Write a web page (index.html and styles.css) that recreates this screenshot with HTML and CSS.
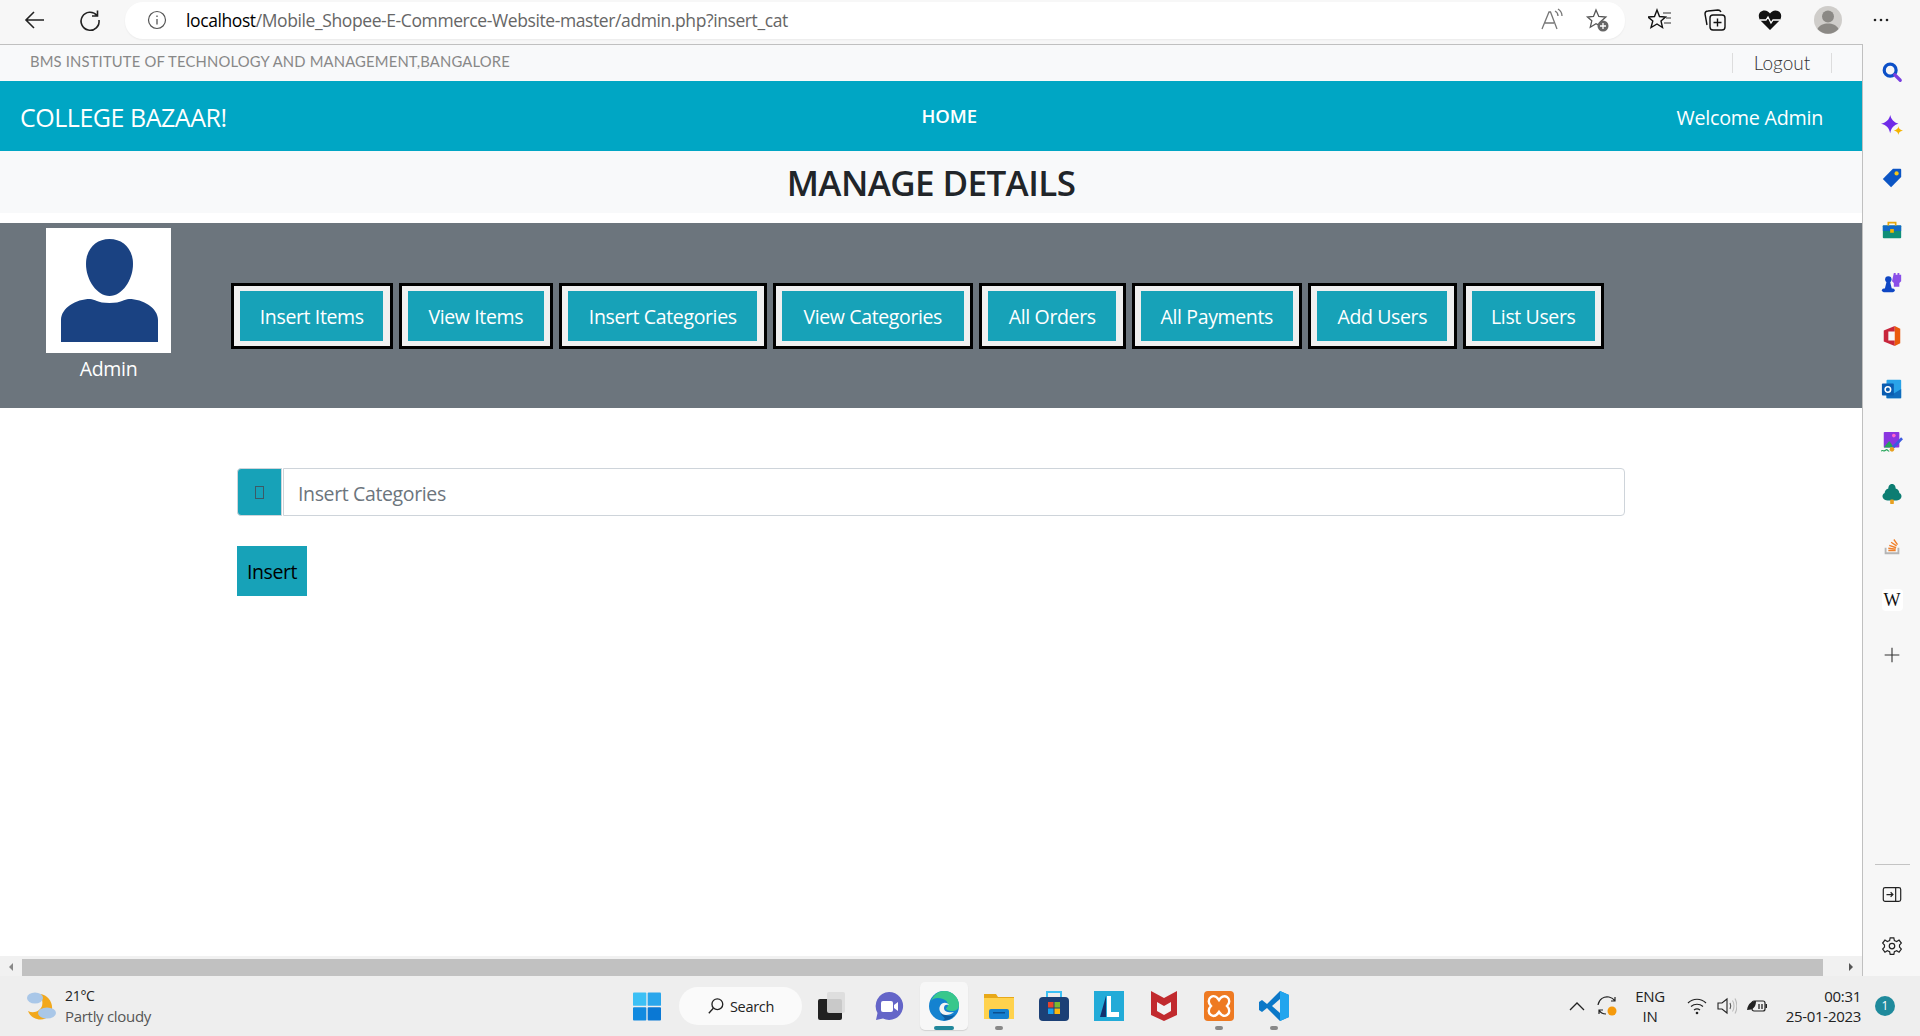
FILE: index.html
```html
<!DOCTYPE html>
<html lang="en">
<head>
<meta charset="utf-8">
<title>Manage Details</title>
<link rel="stylesheet" href="styles.css">
</head>
<body>
<div class="app">
  <header class="toolbar">
    <div class="nav-icons">
      <svg class="t-ic" viewBox="0 0 24 24"><path d="M21 12H4M11 4l-8 8 8 8" fill="none" stroke="#222" stroke-width="1.6"/></svg>
      <svg class="t-ic" viewBox="0 0 24 24"><path d="M19 7.500A9 9 0 1 0 21 12M19.500 2.500V8H14" fill="none" stroke="#222" stroke-width="1.6"/></svg>
    </div>
    <div class="address">
      <svg class="info" viewBox="0 0 20 20"><circle cx="10" cy="10" r="8.500" fill="none" stroke="#555" stroke-width="1.200"/><path d="M10 9v5.500M10 5.500v1.500" stroke="#555" stroke-width="1.300"/></svg>
      <span class="url"><span class="url-host">localhost</span>/Mobile_Shopee-E-Commerce-Website-master/admin.php?insert_cat</span>
      <span class="addr-end">
        <svg class="t-ic" viewBox="0 0 24 24"><path d="M2 21L9 4h1.500L17 21M5 15h9M15 3c2 1 3 3 3 5M18 1c3 2 4 4 4 7" fill="none" stroke="#777" stroke-width="1.300"/></svg>
        <svg class="t-ic" viewBox="0 0 24 24"><path d="M11 2l2.800 6.500 7 .6-5.300 4.600 1.200 5-5.700-3-5.700 3.500 1.500-6.400L2.500 9l6-.5z" fill="none" stroke="#555" stroke-width="1.300"/><circle cx="18" cy="18" r="5.500" fill="#666"/><path d="M18 15v6M15 18h6" stroke="#fff" stroke-width="1.300"/></svg>
      </span>
    </div>
    <div class="tool-icons">
      <svg class="t-ic" viewBox="0 0 24 24"><path d="M9 2l2.500 6.500 6 .5-4.500 4 1.500 6.500-5.500-3.500-6 3.500 1.800-6.500L0 9l6.500-.5z" fill="none" stroke="#111" stroke-width="1.400"/><path d="M15 5h8M18 10h5M16 15h7" stroke="#333" stroke-width="1.200"/></svg>
      <svg class="t-ic" viewBox="0 0 24 24"><rect x="7" y="7" width="15" height="15" rx="3" fill="none" stroke="#111" stroke-width="1.400"/><path d="M14.500 10.500v8M10.500 14.500h8" stroke="#111" stroke-width="1.400"/><path d="M4 17L2 6c0-2 1-3 3-3l10-1c1.500 0 2.500 1 3 2" fill="none" stroke="#111" stroke-width="1.400"/></svg>
      <svg class="t-ic" viewBox="0 0 24 24"><path d="M12 22L2 12C-1 7 2 2.500 6.500 2.500 9 2.500 11 4 12 5.500 13 4 15 2.500 17.500 2.500 22 2.500 25 7 22 12z" fill="#111"/><path d="M2 12h6l2-3 3 6 2-3h7" fill="none" stroke="#fff" stroke-width="1.300"/></svg>
      <svg class="avatar-ic" viewBox="0 0 28 28"><circle cx="14" cy="14" r="14" fill="#cfcdca"/><circle cx="14" cy="10.500" r="6" fill="#8b8985"/><path d="M3.500 23c2-4 6-5.500 10.500-5.500S22.500 19 24.500 23a14 14 0 0 1-21 0z" fill="#8b8985"/></svg>
      <svg class="dots" viewBox="0 0 16 4"><circle cx="2" cy="2" r="1.300" fill="#222"/><circle cx="8" cy="2" r="1.300" fill="#222"/><circle cx="14" cy="2" r="1.300" fill="#222"/></svg>
    </div>
  </header>

  <div class="workspace">
    <div class="main">
      <div class="page">
        <div class="topline">
          <span class="college">BMS INSTITUTE OF TECHNOLOGY AND MANAGEMENT,BANGALORE</span>
          <a class="logout">Logout</a>
        </div>
        <nav class="brandbar">
          <span class="brand">COLLEGE BAZAAR!</span>
          <span class="home">HOME</span>
          <span class="welcome">Welcome Admin</span>
        </nav>
        <h1 class="title">MANAGE DETAILS</h1>
        <section class="admin-band">
          <div class="profile">
            <div class="photo">
              <svg class="photo-svg" viewBox="0 0 125 125"><path d="M63.500 11C50 11 40 21 40 36c0 16 11 32 23.500 32S87 52 87 36C87 21 77 11 63.500 11z" fill="#1a4282"/><path d="M15 114V92C15 80 30 71 44 71c5 0 7 4 19.500 4S78 71 83 71c14 0 29 9 29 21v22z" fill="#1a4282"/></svg>
            </div>
            <span class="admin-name">Admin</span>
          </div>
          <div class="actions">
            <div class="act"><a class="act-btn w1">Insert Items</a></div>
            <div class="act"><a class="act-btn w2">View Items</a></div>
            <div class="act"><a class="act-btn w3">Insert Categories</a></div>
            <div class="act"><a class="act-btn w4">View Categories</a></div>
            <div class="act"><a class="act-btn w5">All Orders</a></div>
            <div class="act"><a class="act-btn w6">All Payments</a></div>
            <div class="act"><a class="act-btn w7">Add Users</a></div>
            <div class="act"><a class="act-btn w8">List Users</a></div>
          </div>
        </section>
        <form class="cat-form">
          <div class="input-group">
            <span class="prepend"><span class="tofu"></span></span>
            <input class="cat-input" type="text" placeholder="Insert Categories">
          </div>
          <button class="insert" type="button">Insert</button>
        </form>
      </div>
      <div class="hscroll">
        <svg class="arrow" viewBox="0 0 8 10"><path d="M6 1v8L2 5z" fill="#888"/></svg>
        <div class="thumb"></div>
        <svg class="arrow arrow-end" viewBox="0 0 8 10"><path d="M2 1v8l4-4z" fill="#555"/></svg>
      </div>
    </div>

    <aside class="sidebar">
      <div class="side-top">
        <svg class="s-ic" viewBox="0 0 24 24"><circle cx="10" cy="10" r="6.500" fill="none" stroke="#0c50c8" stroke-width="3.500"/><path d="M15 15l6 6" stroke="#7a3fe0" stroke-width="3.500" stroke-linecap="round"/></svg>
        <svg class="s-ic" viewBox="0 0 24 24"><path d="M10 1c1 5 4 8 9 9.500-5 1.500-8 4.500-9 10.500-1-6-4-9-10-10.500C6 9 9 6 10 1z" fill="#6f2be8"/><path d="M19 13c.4 2.800 1.200 3.700 5 5-3.800 1.300-4.600 2.200-5 5-.4-2.800-1.200-3.700-5-5 3.800-1.300 4.600-2.200 5-5z" fill="#f5b400"/></svg>
        <svg class="s-ic" viewBox="0 0 24 24"><path d="M13 2h8a1 1 0 0 1 1 1v8L11 22 2 13z" fill="#0c55c4"/><circle cx="17" cy="7" r="2.300" fill="#f5c518"/></svg>
        <svg class="s-ic" viewBox="0 0 24 24"><rect x="2" y="7" width="20" height="14" rx="1" fill="#0f8f78"/><rect x="2" y="7" width="20" height="6" fill="#1269c7"/><path d="M8 7V4h8v3" fill="none" stroke="#e8a80c" stroke-width="1.800"/><rect x="10" y="11" width="4" height="4" fill="#f5b400"/></svg>
        <svg class="s-ic" viewBox="0 0 24 24"><path d="M14 1h2v2h2V1h2v2h2V1v9l-2 2v4h-6v-4l-2-2z" fill="#8a4fe8"/><circle cx="8" cy="8" r="3.500" fill="#0f47c4"/><path d="M6 11h4l2 8H4z" fill="#0f47c4"/><rect x="1" y="18" width="14" height="4" rx="2" fill="#0f47c4"/></svg>
        <svg class="s-ic" viewBox="0 0 24 24"><path d="M3 6l12-5v6H8v10h7v6L3 18z" fill="#c8263c"/><path d="M15 1l6 3v16l-6 3z" fill="#ea5a0c"/></svg>
        <svg class="s-ic" viewBox="0 0 24 24"><rect x="6" y="2" width="16" height="20" rx="1" fill="#29a3e8"/><path d="M6 12l8 5 8-5v10H6z" fill="#0f6cbd"/><rect x="1" y="6" width="13" height="13" rx="1" fill="#0a5cb0"/><circle cx="7.500" cy="12.500" r="3" fill="none" stroke="#fff" stroke-width="1.700"/></svg>
        <svg class="s-ic" viewBox="0 0 24 24"><rect x="3" y="1" width="17" height="17" rx="1" fill="#8a35e0"/><path d="M3 18l6-7 5 7z" fill="#25a55a"/><circle cx="14" cy="5" r="2" fill="#f6c"/><path d="M23 8L13 18" stroke="#3d5ae0" stroke-width="3"/><circle cx="12" cy="20" r="2.500" fill="#e8a020"/><path d="M0 22c2-2 3 1 5-1s2 1 4 1" fill="none" stroke="#25a55a" stroke-width="1.200"/></svg>
        <svg class="s-ic" viewBox="0 0 24 24"><path d="M12 1c-3 0-4 3-4 5-3 1-4 3-4 5-2 1-3 3-2 5 1 2 3 3 5 3h10c2 0 4-1 5-3 1-2 0-4-2-5 0-2-1-4-4-5 0-2-1-5-4-5z" fill="#0c7d72"/><rect x="10" y="18" width="4" height="5" rx="1" fill="#e8a020"/></svg>
        <svg class="s-ic s-up" viewBox="0 0 24 24"><path d="M5 15v6h14v-6" fill="none" stroke="#b5b5b5" stroke-width="2"/><path d="M8 18h8M8 15.500l8 1M9 12.500l7.500 2.500M11 9l6 4M14 6l4 5.500" stroke="#f0802a" stroke-width="1.500"/></svg>
        <span class="wiki">W</span>
        <svg class="s-ic s-down" viewBox="0 0 24 24"><path d="M12 4v16M4 12h16" stroke="#333" stroke-width="1.200"/></svg>
      </div>
      <div class="side-bottom">
        <div class="side-sep"></div>
        <svg class="s-ic" viewBox="0 0 24 24"><rect x="2.500" y="4" width="19" height="15" rx="2" fill="none" stroke="#222" stroke-width="1.300"/><path d="M16 4v15M6 11.500h7M10.500 9l2.500 2.500-2.500 2.500" fill="none" stroke="#222" stroke-width="1.300"/></svg>
        <svg class="s-ic" viewBox="0 0 24 24"><path d="M10 2h4l.6 3 2.500 1 2.600-1.600 2.500 3.300-2 2.200v2.200l2 2.200-2.500 3.300-2.600-1.600-2.500 1-.6 3h-4l-.6-3-2.500-1-2.600 1.600-2.500-3.300 2-2.200V9.900l-2-2.200 2.500-3.300 2.600 1.600 2.500-1z" fill="none" stroke="#222" stroke-width="1.300"/><circle cx="12" cy="11" r="3" fill="none" stroke="#222" stroke-width="1.300"/></svg>
      </div>
    </aside>
  </div>

  <footer class="taskbar">
    <div class="weather">
      <svg class="weather-ic" viewBox="0 0 30 32"><path d="M14 4c8 1 13 8 12 16-1 7-8 11-15 9-5-1-8-5-9-8 6 3 12 0 14-5 1-4 0-8-2-12z" fill="#f2a81c"/><ellipse cx="9" cy="8" rx="8" ry="5.500" fill="#a9c7e8"/><ellipse cx="21" cy="23" rx="9" ry="5.500" fill="#a9c7e8"/></svg>
      <div class="weather-text"><span class="temp">21°C</span><span class="cond">Partly cloudy</span></div>
    </div>
    <div class="task-center">
      <div class="tile"><svg class="b-ic b-win" viewBox="0 0 30 30"><rect x="0" y="0" width="14.300" height="14.300" rx="1" fill="#3cc0f5"/><rect x="15.700" y="0" width="14.300" height="14.300" rx="1" fill="#2aa6ec"/><rect x="0" y="15.700" width="14.300" height="14.300" rx="1" fill="#118ae0"/><rect x="15.700" y="15.700" width="14.300" height="14.300" rx="1" fill="#0a78d4"/></svg></div>
      <div class="search-pill"><svg class="search-ic" viewBox="0 0 20 20"><circle cx="11.500" cy="8" r="6" fill="none" stroke="#222" stroke-width="1.500"/><path d="M7 12.500L2 18" stroke="#222" stroke-width="1.500"/></svg><span>Search</span></div>
      <div class="tile tile-narrow"><svg class="b-ic" viewBox="0 0 30 30"><rect x="1" y="8" width="24" height="21" rx="2" fill="#222"/><rect x="10" y="1" width="18" height="21" rx="2" fill="#dcdcdc" fill-opacity=".9"/></svg></div>
      <div class="tile"><svg class="b-ic" viewBox="0 0 30 30"><path d="M15 1a14 14 0 1 1-6 26.600L2 29l1.500-7A14 14 0 0 1 15 1z" fill="#6465c8"/><rect x="7" y="10" width="12" height="11" rx="2" fill="#fff"/><path d="M20 14l4-3v9l-4-3z" fill="#fff"/></svg></div>
      <div class="tile tile-active"><svg class="b-ic" viewBox="0 0 30 30"><circle cx="15" cy="15" r="15" fill="#1482d0"/><path d="M2 10C5 3 10 0 15 0c9 0 15 7 15 14 0 4-3 6-7 6-3 0-6-1-6-3 3-1 3-7-3-9C9 6 4 7 2 10z" fill="#38c78c"/><path d="M12 17c0 5 5 8 9 8 2 0 4-1 5-2-3 5-8 7-12 6 4-1 0-3-2-6z" fill="#0d5a9e"/><path d="M11 15c2-4 7-4 9-1-3-1-5 0-5 3 0 4 5 5 10 4-2 2-5 3-8 3-5 0-8-5-6-9z" fill="#f4f4f4"/></svg><span class="run run-active"></span></div>
      <div class="tile"><svg class="b-ic" viewBox="0 0 30 30"><path d="M0 3h12l2 3h16v22H0z" fill="#e8a818"/><rect x="0" y="7" width="30" height="21" fill="#ffd24d"/><rect x="5" y="18" width="20" height="10" rx="2" fill="#1580d0"/><rect x="9" y="21" width="12" height="1.500" fill="#0b4f90"/></svg><span class="run"></span></div>
      <div class="tile"><svg class="b-ic" viewBox="0 0 30 30"><rect x="0" y="6" width="30" height="24" rx="4" fill="#1c4076"/><path d="M8 6V1h14v5" fill="none" stroke="#3cc0f5" stroke-width="2"/><rect x="9" y="11" width="5.500" height="5.500" fill="#e8452c"/><rect x="15.500" y="11" width="5.500" height="5.500" fill="#7cb82e"/><rect x="9" y="17.500" width="5.500" height="5.500" fill="#18a0ee"/><rect x="15.500" y="17.500" width="5.500" height="5.500" fill="#fbb70c"/></svg></div>
      <div class="tile"><svg class="b-ic" viewBox="0 0 30 30"><rect width="30" height="30" fill="#22abd8"/><path d="M6 26L12 5v21z" fill="#12316e"/><path d="M13 5h4v16h8v5H13z" fill="#fff"/></svg></div>
      <div class="tile"><svg class="b-ic" viewBox="0 0 30 30"><path d="M2 0l13 7 13-7v24l-13 6-13-6z" fill="#c12a2e"/><path d="M8 11l7 4 7-4v9l-7 4-7-4z" fill="#f2f2f2"/></svg></div>
      <div class="tile"><svg class="b-ic" viewBox="0 0 30 30"><rect width="30" height="30" rx="4" fill="#ee7a22"/><path d="M7 6c3-2 6 0 8 3 2-3 5-5 8-3s3 6 0 9c3 3 3 7 0 9s-6 0-8-3c-2 3-5 5-8 3s-3-6 0-9c-3-3-3-7 0-9z" fill="none" stroke="#fff" stroke-width="2.400"/></svg><span class="run"></span></div>
      <div class="tile"><svg class="b-ic" viewBox="0 0 30 30"><path d="M21 0l9 4v22l-9 4L8 17l-5 4-3-2v-8l3-2 5 4z" fill="#0b78c8"/><path d="M21 0l9 4v22l-9 4z" fill="#22a5ee"/><path d="M21 8l-8 7 8 7z" fill="#eee"/></svg><span class="run"></span></div>
    </div>
    <div class="tray">
      <svg class="chev" viewBox="0 0 16 10"><path d="M1 9l7-7 7 7" fill="none" stroke="#222" stroke-width="1.300"/></svg>
      <svg class="tray-ic sync" viewBox="0 0 20 20"><path d="M1 9C2 3 7 0 12 1c3 .6 5 2.500 6 4M18 1v4h-4M2 18v-4h4M2 14c1.500 3 4 4 7 4" fill="none" stroke="#222" stroke-width="1.200"/><circle cx="15" cy="15" r="4.500" fill="#f59a0c"/></svg>
      <div class="lang"><span>ENG</span><span>IN</span></div>
      <svg class="tray-ic" viewBox="0 0 20 20"><path d="M1 7c5-5 13-5 18 0M4 10.500c3.500-3 8.500-3 12 0M7 14c2-1.500 4-1.500 6 0" fill="none" stroke="#222" stroke-width="1.200"/><circle cx="10" cy="17" r="1.300" fill="#222"/></svg>
      <svg class="tray-ic" viewBox="0 0 20 20"><path d="M1 7h4l5-4v14l-5-4H1z" fill="none" stroke="#222" stroke-width="1.100"/><path d="M13 7c1 2 1 4 0 6" fill="none" stroke="#555" stroke-width="1.100"/><path d="M15.500 4.500c2 3 2 8 0 11M18 2.500c2.500 5 2.500 10 0 15" fill="none" stroke="#bbb" stroke-width="1.100"/></svg>
      <svg class="tray-ic" viewBox="0 0 20 20"><rect x="5" y="5" width="13" height="10" rx="2" fill="none" stroke="#222" stroke-width="1.200"/><rect x="18.500" y="8" width="1.500" height="4" fill="#222"/><path d="M0 14C1 7 5 5 9 5c0 6-3 9-9 9z" fill="#222"/><path d="M12 8v5M15 8v5" stroke="#222" stroke-width="1.300"/></svg>
      <div class="clock"><span>00:31</span><span>25-01-2023</span></div>
      <span class="badge">1</span>
    </div>
  </footer>
</div>
</body>
</html>
```

FILE: styles.css
```css
* { box-sizing: border-box; }
html, body { margin: 0; height: 100%; overflow: hidden; }
body { font-family: "Open Sans", "Noto Sans", sans-serif; background: #fff; color: #212529; }
.app { display: flex; flex-direction: column; width: 1920px; height: 1036px; }

/* browser toolbar */
.toolbar { height: 44px; flex: none; display: flex; align-items: center; background: #f7f7f7; padding-bottom: 3px; }
.nav-icons { display: flex; align-items: center; gap: 31px; padding-left: 23px; width: 125px; margin-bottom: 2px; }
.t-ic { width: 24px; height: 24px; display: block; flex: none; }
.address { width: 1500px; height: 37px; background: #fff; border-radius: 18px; display: flex; align-items: center; padding-left: 22px; box-shadow: 0 1px 2px rgba(0,0,0,.05); }
.info { width: 20px; height: 20px; flex: none; margin-bottom: 2px; }
.url { margin-left: 19px; margin-bottom: 2px; font-size: 17.500px; letter-spacing: -.4px; color: #666; white-space: nowrap; }
.url-host { color: #000; }
.addr-end { margin-left: auto; margin-bottom: 2px; display: flex; gap: 21px; padding-right: 16px; }
.tool-icons { display: flex; align-items: center; gap: 31px; padding-left: 23px; margin-bottom: 2px; }
.avatar-ic { width: 28px; height: 28px; flex: none; margin-left: 1px; }
.dots { width: 16px; height: 4px; flex: none; margin-left: 0; }

/* workspace */
.workspace { flex: 1; display: flex; min-height: 0; }
.main { width: 1863px; flex: none; display: flex; flex-direction: column; border-top: 1px solid #c0c0c0; border-right: 1.500px solid #c0c0c0; }
.page { flex: 1; min-height: 0; background: #fff; }
.topline { height: 36px; background: #f8f9fa; display: flex; align-items: center; justify-content: space-between; padding: 0 30px; }
.college { font-family: Lato, sans-serif; font-size: 14.800px; font-weight: 400; color: #888; letter-spacing: .16px; white-space: nowrap; margin-bottom: 5px; }
.logout { font-family: Lato, sans-serif; font-size: 19px; font-weight: 300; color: #333; width: 100px; height: 20px; line-height: 20px; text-align: center; border-left: 1px solid #ddd; border-right: 1px solid #ddd; }
.brandbar { height: 70px; background: #00a6c4; color: #fff; display: grid; grid-template-columns: 1fr auto 1fr; align-items: center; padding: 0 39px 0 20px; }
.brand { font-size: 25px; letter-spacing: -.47px; margin-top: 2px; }
.home { font-size: 18.500px; font-weight: 600; letter-spacing: -.1px; margin-right: -92px; margin-bottom: 1px; }
.welcome { font-size: 19.700px; letter-spacing: -.25px; justify-self: end; margin-top: 2px; }
.title { margin: 0 0 10px; height: 62px; background: #f8f9fa; text-align: center; font-size: 35px; line-height: 64px; font-weight: 600; letter-spacing: -.6px; color: #212529; }
.admin-band { height: 185px; background: #6c757d; display: flex; padding: 5px 0 0 46px; }
.profile { width: 125px; flex: none; display: flex; flex-direction: column; align-items: center; }
.photo { width: 125px; height: 125px; background: #fff; }
.photo-svg { display: block; width: 125px; height: 125px; }
.admin-name { color: #fff; font-size: 19.500px; letter-spacing: -.3px; margin-top: 2px; }
.actions { display: flex; align-items: flex-start; gap: 6px; margin: 55px 0 0 60px; }
.act { border: 3px solid #000; background: #f0f0f0; padding: 5px 6.250px; }
.act-btn { display: block; height: 50px; line-height: 52px; background: #17a2b8; color: #fff; font-size: 19.500px; letter-spacing: -.37px; text-align: center; white-space: nowrap; }
.w1 { width: 143px; } .w2 { width: 136px; } .w3 { width: 189px; } .w4 { width: 182px; }
.w5 { width: 128px; } .w6 { width: 152px; } .w7 { width: 130px; } .w8 { width: 123px; }
.cat-form { padding: 60px 0 0 237px; }
.input-group { display: flex; width: 1388px; height: 48px; }
.prepend { width: 45px; flex: none; background: #17a2b8; border: 1px solid #ced4da; border-radius: 4px 0 0 4px; display: flex; align-items: center; justify-content: center; }
.tofu { width: 9px; height: 13px; border: 1px solid #3c5a66; display: block; }
.cat-input { flex: 1; min-width: 0; height: 48px; border: 1px solid #ced4da; border-radius: 0 4px 4px 0; margin-left: 1px; padding: 3px 14px 0; font-family: inherit; font-size: 19.500px; letter-spacing: -.37px; color: #495057; background: #fff; outline: none; }
.cat-input::placeholder { color: #6c757d; opacity: 1; }
.insert { display: block; margin-top: 30px; width: 70px; height: 50px; border: 0; padding: 1px 0 0; background: #17a2b8; color: #000; font-family: inherit; font-size: 19.500px; letter-spacing: -.39px; }
.hscroll { height: 20px; flex: none; background: #f1f1f1; padding-top: 2px; display: flex; align-items: center; }
.thumb { height: 17px; width: 1801px; background: #c1c1c1; flex: none; }
.arrow { width: 8px; height: 10px; flex: none; margin: 0 7px; }
.arrow-end { margin-left: auto; }

/* edge sidebar */
.sidebar { flex: 1; background: #f7f7f7; display: flex; flex-direction: column; justify-content: space-between; align-items: center; padding-left: 1px; }
.side-top { display: flex; flex-direction: column; align-items: center; gap: 30.800px; padding-top: 17px; }
.s-ic { width: 22px; height: 22px; display: block; flex: none; }
.s-up { margin-top: -2px; margin-bottom: 2px; }
.s-down { margin-top: 2px; }
.wiki { font-family: "Liberation Serif", serif; font-weight: 400; font-size: 18px; line-height: 22px; height: 22px; color: #111; background: #fff; padding: 0 2px; border-radius: 4px; }
.side-bottom { display: flex; flex-direction: column; align-items: center; gap: 30px; padding-bottom: 18px; }
.side-sep { width: 35px; height: 1px; background: #c4c4c4; margin-bottom: -11px; }

/* taskbar */
.taskbar { height: 60px; flex: none; background: #eeeeee; display: flex; align-items: center; }
.weather { width: 619px; flex: none; display: flex; align-items: center; padding-left: 26px; gap: 9px; }
.weather-ic { width: 30px; height: 32px; flex: none; }
.weather-text { display: flex; flex-direction: column; line-height: 20px; }
.temp { font-size: 14px; color: #222; letter-spacing: -.3px; }
.cond { font-size: 15px; color: #555; letter-spacing: -.3px; }
.task-center { display: flex; align-items: center; }
.tile { width: 55px; height: 48px; flex: none; display: flex; align-items: center; justify-content: center; position: relative; }
.tile-narrow { width: 44px; margin-left: 8px; margin-right: 7px; }
.tile-active { background: #f7f7f7; border-radius: 5px; box-shadow: 0 1px 1px rgba(0,0,0,.12); width: 48px; margin: 0 3.500px; }
.b-ic { width: 30px; height: 30px; display: block; }
.b-win { width: 28px; height: 29px; }
.search-pill { width: 123px; height: 38px; margin-left: 5px; border-radius: 19px; background: #fafafa; display: flex; align-items: center; justify-content: center; gap: 5px; font-size: 14.500px; letter-spacing: -.3px; color: #222; }
.search-ic { width: 18px; height: 18px; }
.run { position: absolute; left: 50%; bottom: 0; width: 8px; height: 4px; margin-left: -4px; border-radius: 2px; background: #888; }
.run-active { width: 20px; margin-left: -10px; background: #21879b; }
.tray { margin-left: auto; display: flex; align-items: center; height: 100%; padding-right: 25px; }
.chev { width: 16px; height: 10px; margin-right: 12px; }
.tray-ic { width: 20px; height: 20px; flex: none; margin-right: 10px; }
.sync { margin-right: 15px; }
.lang { width: 36px; margin-right: 19px; display: flex; flex-direction: column; align-items: center; font-size: 15px; line-height: 20px; letter-spacing: -.3px; color: #222; }
.clock { width: 79px; margin-left: 5px; display: flex; flex-direction: column; align-items: flex-end; font-size: 15px; line-height: 20px; letter-spacing: -.3px; color: #222; white-space: nowrap; }
.badge { width: 20px; height: 20px; margin-left: 14px; border-radius: 50%; background: #1f8a9c; color: #fff; font-size: 12px; line-height: 20px; text-align: center; }
```
